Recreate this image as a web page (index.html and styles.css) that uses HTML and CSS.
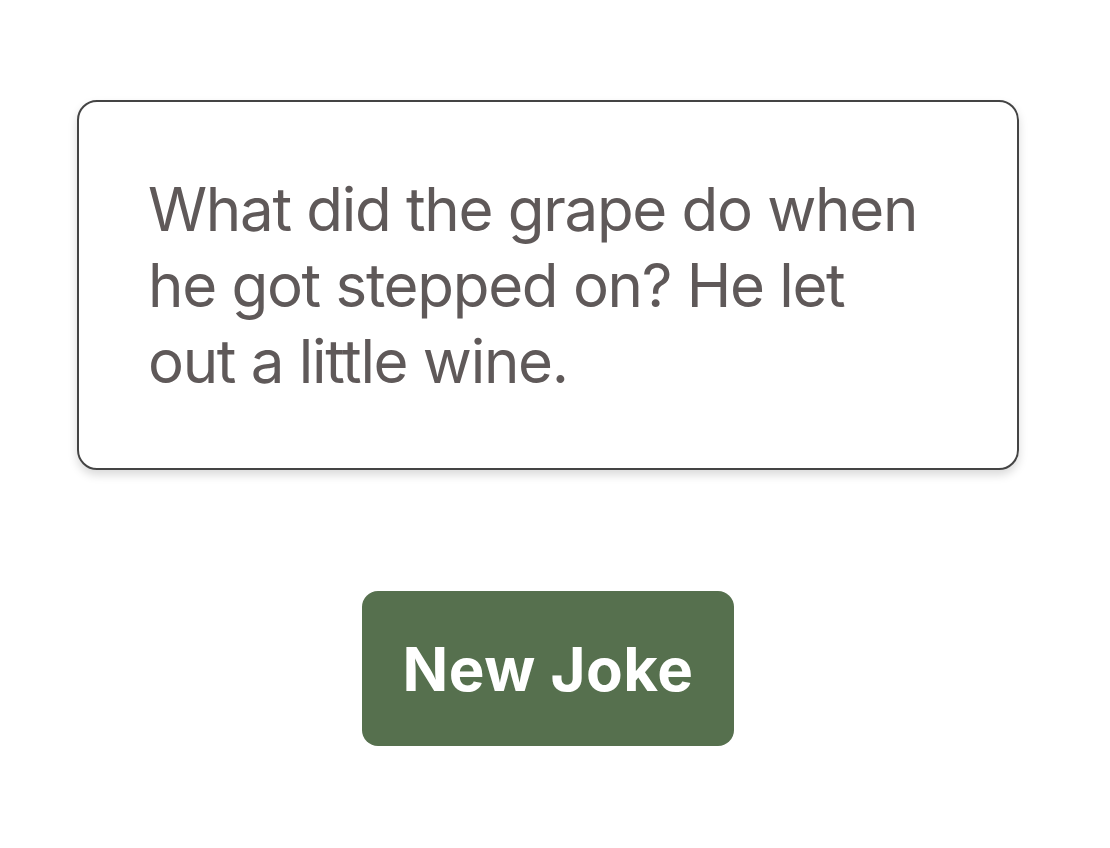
FILE: index.html
```html
<!DOCTYPE html>
<html>
<head>
<meta charset="utf-8">
<link rel="stylesheet" href="styles.css">
</head>
<body>
<main class="app">
  <section class="card">
    <p class="joke">What did the grape do when he got stepped on? He let out a little wine.</p>
  </section>
  <button class="btn">New Joke</button>
</main>
</body>
</html>
```
FILE: styles.css
```css
html, body { margin: 0; padding: 0; background: #ffffff; }
body { font-family: "Inter", "Noto Sans", sans-serif; }
.app {
  width: 942px;
  margin-left: 77px;
  padding-top: 100px;
  display: flex;
  flex-direction: column;
  align-items: center;
}
.card {
  box-sizing: border-box;
  width: 942px;
  height: 370px;
  border: 2px solid #444;
  border-radius: 20px;
  box-shadow: 0 5px 10px rgba(0,0,0,0.15);
  padding: 0 69px;
  display: flex;
  align-items: center;
}
.joke {
  margin: 0;
  font-size: 60px;
  line-height: 76px;
  letter-spacing: -1.3px;
  color: #5f5959;
  width: 798px;
}
.btn {
  margin-top: 121px;
  width: 372px;
  height: 155px;
  border: none;
  border-radius: 16px;
  background: #56704e;
  color: #fff;
  font-family: "Inter", sans-serif;
  font-weight: 700;
  font-size: 60px;
  letter-spacing: 0.5px;
  padding: 0;
}
```
